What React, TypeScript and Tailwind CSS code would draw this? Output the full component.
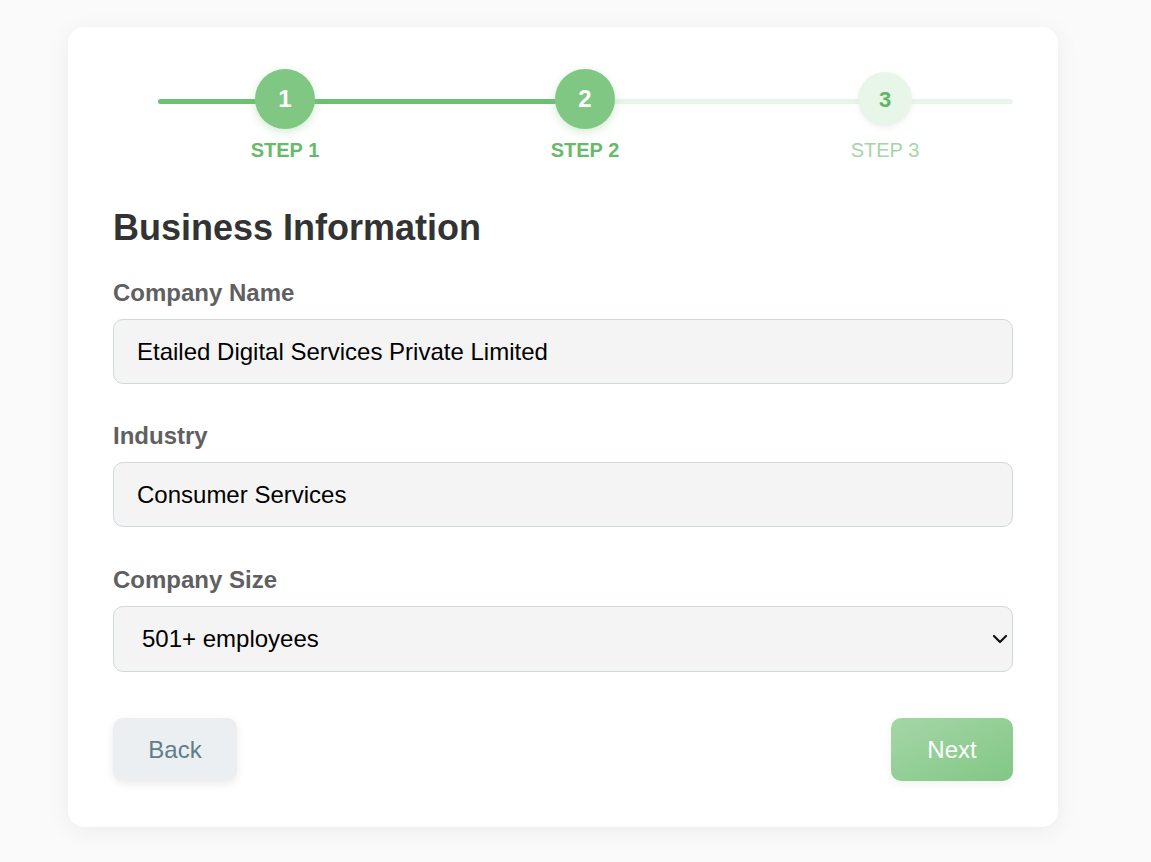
import React from "react";

const steps = [
  { n: 1, state: "done" },
  { n: 2, state: "active" },
  { n: 3, state: "todo" },
];

function Stepper() {
  return (
    <div className="relative">
      {/* track */}
      <div className="absolute left-[45px] right-0 top-[30px] h-[5px] rounded-full bg-[#e8f5e9]" />
      <div className="absolute left-[45px] top-[30px] h-[5px] w-[427px] rounded-full bg-[#6dbf73]" />
      <div className="relative flex pl-[22px]">
        {steps.map((s) => (
          <div key={s.n} className="flex w-[300px] shrink-0 flex-col items-center">
            <div className="flex h-[60px] items-center justify-center">
              {s.state === "todo" ? (
                <div className="flex h-[54px] w-[54px] items-center justify-center rounded-full bg-[#e8f5e9] text-[22px] font-bold text-[#5cb860] shadow-[0_2px_6px_rgba(0,0,0,0.06)]">
                  {s.n}
                </div>
              ) : (
                <div className="flex h-[60px] w-[60px] items-center justify-center rounded-full bg-[#81c784] text-[24px] font-bold text-white shadow-[0_3px_10px_rgba(129,199,132,0.35)]">
                  {s.n}
                </div>
              )}
            </div>
            <div
              className={
                s.state === "todo"
                  ? "mt-[9px] text-[20px] leading-[24px] text-[#a5d6a7]"
                  : "mt-[9px] text-[20px] font-bold leading-[24px] text-[#66bb6a]"
              }
            >
              STEP {s.n}
            </div>
          </div>
        ))}
      </div>
    </div>
  );
}

function Field({ label, children }: { label: string; children: React.ReactNode }) {
  return (
    <div className="flex flex-col">
      <label className="mb-[12px] text-[24px] font-bold leading-[28px] text-[#5f6062]">{label}</label>
      {children}
    </div>
  );
}

const inputCls =
  "h-[65px] w-full rounded-[10px] border border-[#cfd8dc] bg-[#f4f4f4] px-[23px] text-[24px] text-black outline-none";

export default function App() {
  return (
    <div
      className="min-h-[862px] w-full bg-[#fafafa] pt-[27px]"
      style={{ fontFamily: '"Liberation Sans", Arial, sans-serif' }}
    >
      <div className="ml-[68px] w-[990px] rounded-[16px] bg-white px-[45px] pb-[46px] pt-[42px] shadow-[0_4px_24px_rgba(0,0,0,0.06)]">
        <Stepper />
        <h2 className="mt-[44px] text-[36px] font-bold leading-[43px] text-[#333333]">Business Information</h2>
        <div className="mt-[30px] flex flex-col gap-[38px]">
          <Field label="Company Name">
            <input className={inputCls} defaultValue="Etailed Digital Services Private Limited" />
          </Field>
          <Field label="Industry">
            <input className={inputCls} defaultValue="Consumer Services" />
          </Field>
          <div className="pt-[1px]">
            <Field label="Company Size">
              <div className="relative">
                <select
                  className="h-[66px] w-full appearance-none rounded-[10px] border border-[#cfd8dc] bg-[#f4f4f4] pl-[28px] pr-[40px] text-[24px] text-black outline-none"
                  defaultValue="501+"
                >
                  <option value="1-10">1-10 employees</option>
                  <option value="11-50">11-50 employees</option>
                  <option value="51-200">51-200 employees</option>
                  <option value="201-500">201-500 employees</option>
                  <option value="501+">501+ employees</option>
                </select>
                <svg
                  className="pointer-events-none absolute right-[5px] top-[28px]"
                  width="16"
                  height="10"
                  viewBox="0 0 16 10"
                  fill="none"
                >
                  <polyline points="2,2 8,8 14,2" stroke="#111" strokeWidth="2.2" strokeLinecap="round" strokeLinejoin="round" />
                </svg>
              </div>
            </Field>
          </div>
        </div>
        <div className="mt-[46px] flex items-center justify-between">
          <button className="h-[63px] w-[124px] rounded-[10px] bg-[#eceff1] text-[24px] text-[#607d8b] shadow-[0_3px_8px_rgba(0,0,0,0.08)]">
            Back
          </button>
          <button className="h-[63px] w-[122px] rounded-[10px] bg-gradient-to-br from-[#a5d6a7] to-[#81c784] text-[24px] text-white shadow-[0_3px_8px_rgba(0,0,0,0.06)]">
            Next
          </button>
        </div>
      </div>
    </div>
  );
}
